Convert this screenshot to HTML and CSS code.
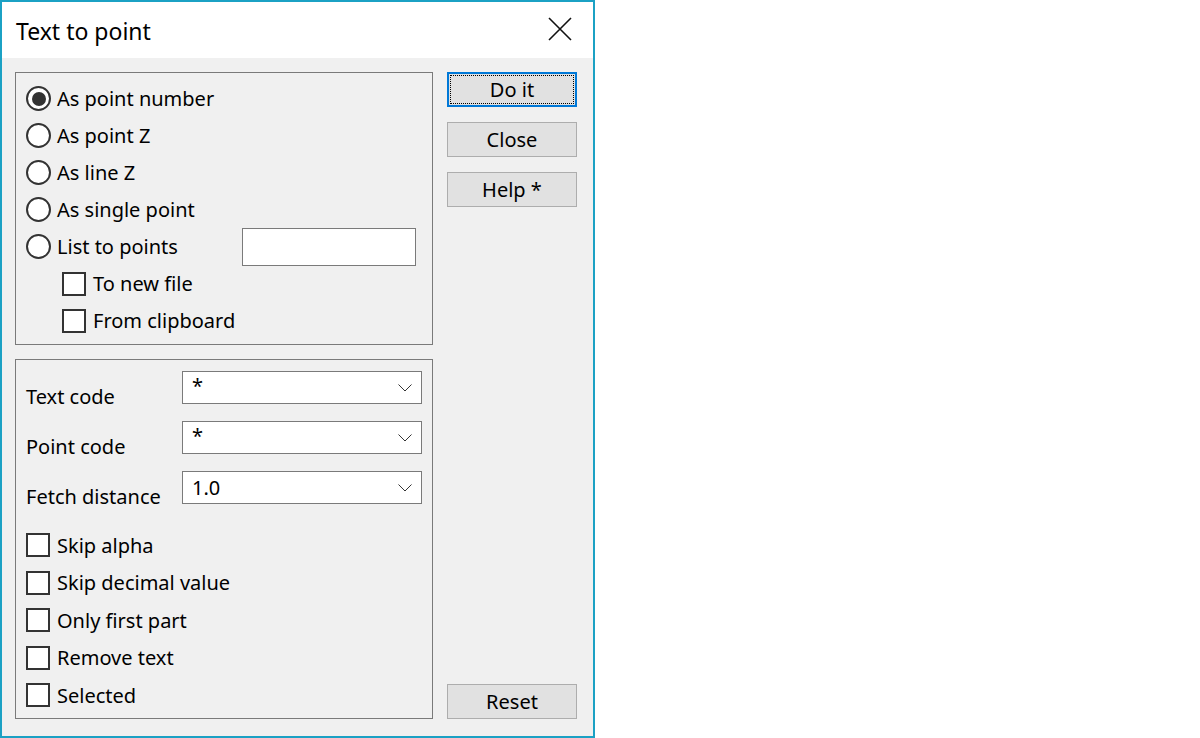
FILE: index.html
```html
<!DOCTYPE html>
<html lang="en">
<head>
    <meta charset="UTF-8">
    <title>Text to point</title>
    <link rel="stylesheet" href="styles.css">
</head>
<body>
    <div class="window">
        <div class="titlebar">
            <span class="title">Text to point</span>
            <svg class="close" width="24" height="24" viewBox="0 0 24 24">
                <path d="M1 1 L23 23 M23 1 L1 23" stroke="#111" stroke-width="1.6" fill="none"/>
            </svg>
        </div>
        <div class="client">
            <div class="left">
                <div class="group group-mode">
                    <div class="row"><span class="radio checked"></span>As point number</div>
                    <div class="row"><span class="radio"></span>As point Z</div>
                    <div class="row"><span class="radio"></span>As line Z</div>
                    <div class="row"><span class="radio"></span>As single point</div>
                    <div class="row">
                        <span class="radio"></span>List to points
                        <span class="textbox"></span>
                    </div>
                    <div class="row sub"><span class="check"></span>To new file</div>
                    <div class="row sub"><span class="check"></span>From clipboard</div>
                </div>
                <div class="group group-opts">
                    <div class="field">
                        <span class="label">Text code</span>
                        <div class="combo"><span class="value star">*</span><svg class="arrow" width="14" height="8" viewBox="0 0 14 8"><path d="M0.5 0.5 L7 7 L13.5 0.5" stroke="#333" stroke-width="1" fill="none"/></svg></div>
                    </div>
                    <div class="field">
                        <span class="label">Point code</span>
                        <div class="combo"><span class="value star">*</span><svg class="arrow" width="14" height="8" viewBox="0 0 14 8"><path d="M0.5 0.5 L7 7 L13.5 0.5" stroke="#333" stroke-width="1" fill="none"/></svg></div>
                    </div>
                    <div class="field">
                        <span class="label">Fetch distance</span>
                        <div class="combo"><span class="value">1.0</span><svg class="arrow" width="14" height="8" viewBox="0 0 14 8"><path d="M0.5 0.5 L7 7 L13.5 0.5" stroke="#333" stroke-width="1" fill="none"/></svg></div>
                    </div>
                    <div class="checks">
                        <div class="row"><span class="check"></span>Skip alpha</div>
                        <div class="row"><span class="check"></span>Skip decimal value</div>
                        <div class="row"><span class="check"></span>Only first part</div>
                        <div class="row"><span class="check"></span>Remove text</div>
                        <div class="row"><span class="check"></span>Selected</div>
                    </div>
                </div>
            </div>
            <div class="right">
                <button class="btn default"><span>Do it</span></button>
                <button class="btn">Close</button>
                <button class="btn">Help *</button>
                <button class="btn reset">Reset</button>
            </div>
        </div>
    </div>
</body>
</html>
```

FILE: styles.css
```css
body{
    margin: 0;
    background-color: white;
    font-family: "Noto Sans", "Open Sans", sans-serif;
    font-size: 20px;
    color: black;
}
.window{
    width: 595px;
    height: 738px;
    box-sizing: border-box;
    border: 2px solid #1ba1c4;
    display: flex;
    flex-direction: column;
}
.titlebar{
    height: 56px;
    background-color: white;
    display: flex;
    align-items: center;
    padding-left: 14px;
    padding-right: 21px;
}
.title{
    flex: 1;
    font-size: 23px;
    margin-top: 2px;
}
.close{
    margin-top: -2px;
}
.client{
    flex: 1;
    background-color: #f0f0f0;
    display: flex;
    padding: 14px 16px 17px 13px;
}
.left{
    width: 418px;
    display: flex;
    flex-direction: column;
    gap: 14px;
}
.group{
    border: 1px solid #7a7a7a;
    box-sizing: border-box;
}
.group-mode{
    height: 273px;
    padding: 7px 10px 0 10px;
}
.group-mode .row{
    height: 37px;
}
.group-opts{
    flex: 1;
    padding: 11px 10px 0 10px;
}
.row{
    height: 37.5px;
    display: flex;
    align-items: center;
}
.row.sub{
    padding-left: 36px;
}
.radio{
    width: 25px;
    height: 25px;
    box-sizing: border-box;
    border: 2px solid #333;
    border-radius: 50%;
    background-color: white;
    margin-right: 6px;
    display: flex;
    align-items: center;
    justify-content: center;
}
.radio.checked::after{
    content: "";
    width: 14px;
    height: 14px;
    border-radius: 50%;
    background-color: #333;
}
.check{
    width: 24px;
    height: 24px;
    box-sizing: border-box;
    border: 2px solid #333;
    background-color: white;
    margin-right: 7px;
}
.textbox{
    margin-left: auto;
    margin-right: 6px;
    width: 174px;
    height: 38px;
    box-sizing: border-box;
    border: 1px solid #7a7a7a;
    background-color: white;
}
.field{
    height: 50px;
    display: flex;
    align-items: flex-start;
}
.label{
    width: 156px;
    padding-top: 12px;
}
.combo{
    width: 240px;
    height: 33px;
    box-sizing: border-box;
    border: 1px solid #7a7a7a;
    background-color: white;
    display: flex;
    align-items: center;
    padding-left: 9px;
    padding-right: 9px;
}
.value{
    flex: 1;
}
.value.star{
    align-self: flex-start;
    margin-top: 0;
}
.arrow{
    margin-top: 1px;
}
.checks{
    margin-top: 5.5px;
}
.right{
    width: 130px;
    margin-left: 14px;
    display: flex;
    flex-direction: column;
    gap: 15px;
}
.btn{
    height: 35px;
    box-sizing: border-box;
    border: 1px solid #adadad;
    background-color: #e1e1e1;
    font-family: inherit;
    font-size: 20px;
    color: black;
    padding: 0;
}
.btn.default{
    border: 2px solid #0078d7;
    padding: 1px;
}
.btn.default span{
    display: flex;
    align-items: center;
    justify-content: center;
    height: 100%;
    box-sizing: border-box;
    border: 1px dotted black;
}
.btn.reset{
    margin-top: auto;
}
```
